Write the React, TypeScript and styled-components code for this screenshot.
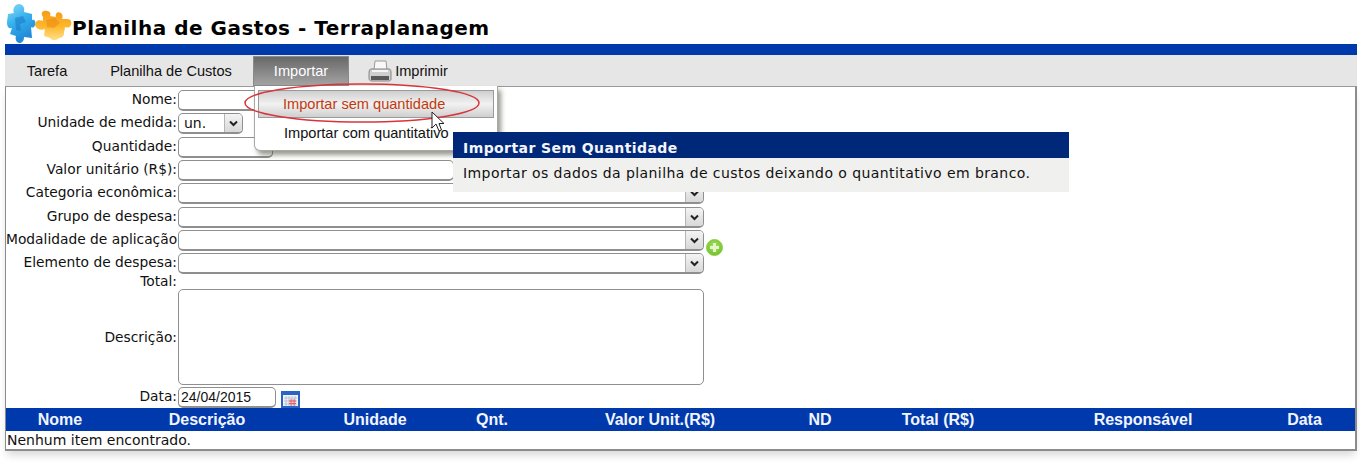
import styled, { createGlobalStyle } from "styled-components";

const GlobalStyle = createGlobalStyle`
  html, body {
    margin: 0;
    padding: 0;
    background: #fff;
    font-family: "DejaVu Sans", Verdana, sans-serif;
    color: #111;
  }
`;

const Page = styled.div`
  position: relative;
  width: 1360px;
  height: 467px;
  overflow: hidden;
  padding: 0 3px 0 5px;
  box-sizing: border-box;
`;

const Header = styled.header`
  height: 44px;
  display: flex;
  align-items: flex-end;
`;

const Logo = styled.svg`
  width: 67px;
  height: 44px;
  flex: none;
`;

const Title = styled.h1`
  margin: 0 0 3px;
  font-size: 20px;
  line-height: 26px;
  font-weight: bold;
  color: #000;
  letter-spacing: 0.5px;
`;

const BlueBar = styled.div`
  height: 11px;
  background: #0039ab;
`;

const Nav = styled.nav`
  height: 31px;
  background: #e6e6e6;
  display: flex;
  align-items: stretch;
  font-family: "Liberation Sans", Arial, sans-serif;
  font-size: 14.6px;
`;

const NavItem = styled.div<{ $width: number; $active?: boolean }>`
  width: ${p => p.$width}px;
  box-sizing: border-box;
  display: flex;
  align-items: center;
  justify-content: center;
  gap: 3px;
  margin-top: 1px;
  color: ${p => (p.$active ? "#fff" : "#111")};
  background: ${p => (p.$active ? "linear-gradient(#686868, #a3a3a3)" : "transparent")};
  border: ${p => (p.$active ? "1px solid #8a8a8a" : "none")};
`;

const Content = styled.main`
  height: 365px;
  box-sizing: border-box;
  border: 1px solid #8c8c8c;
  border-top-color: #9a9a9a;
  border-right-width: 2px;
  border-bottom: 2px solid #8c8c8c;
  box-shadow: 0 6px 8px -2px #d8d8d8;
  display: flex;
  flex-direction: column;
`;

const Form = styled.form`
  padding-top: 3px;
  height: 321px;
  box-sizing: border-box;
`;

const Row = styled.div<{ $height: number }>`
  height: ${p => p.$height}px;
  display: grid;
  grid-template-columns: 171px 1fr;
  gap: 1px;
  font-size: 13.8px;
`;

const Label = styled.label<{ $center?: boolean }>`
  text-align: right;
  white-space: nowrap;
  line-height: 18px;
  align-self: ${p => (p.$center ? "center" : "start")};
  margin-bottom: ${p => (p.$center ? "2px" : "0")};
`;

const Field = styled.div`
  display: flex;
  align-items: flex-start;
  gap: 1px;
`;

const TextInput = styled.input<{ $width: number }>`
  width: ${p => p.$width}px;
  height: 21px;
  box-sizing: border-box;
  padding: 0 2px;
  background: #fff;
  border: 1px solid #8f8f8f;
  border-bottom-width: 2px;
  border-radius: 5px;
  font-family: "Liberation Sans", Arial, sans-serif;
  font-size: 14px;
  color: #111;
  outline: none;
`;

const SelectBox = styled.div<{ $width: number }>`
  width: ${p => p.$width}px;
  height: 21px;
  box-sizing: border-box;
  display: flex;
  justify-content: space-between;
  padding-left: 5px;
  background: #fff;
  border: 1px solid #8f8f8f;
  border-bottom-width: 2px;
  border-radius: 5px;
  font-size: 14px;
  line-height: 19px;
`;

const SelectArrow = styled.span`
  width: 17px;
  flex: none;
  display: flex;
  align-items: center;
  justify-content: center;
  background: linear-gradient(#f4f4f4, #d8d8d8);
  border-left: 1px solid #b5b5b5;
  border-radius: 0 4px 4px 0;
`;

const TextArea = styled.textarea`
  width: 526px;
  height: 96px;
  box-sizing: border-box;
  background: #fff;
  border: 1px solid #8f8f8f;
  border-radius: 5px;
  resize: none;
  outline: none;
`;

const AddIcon = styled.svg`
  width: 19px;
  height: 19px;
  margin: 8px 0 0 0;
  flex: none;
`;

const CalendarIcon = styled.svg`
  width: 19px;
  height: 17px;
  margin: 4px 0 0 4px;
  flex: none;
`;

const TableHead = styled.div`
  height: 23px;
  display: grid;
  grid-template-columns: 108px 186px 150px 84px 252px 68px 168px 242px 91px;
  background: #0039ab;
  color: #f2f5ff;
  font-family: "Liberation Sans", Arial, sans-serif;
  font-size: 16px;
  font-weight: bold;
  line-height: 23px;
  text-align: center;

  & > span:last-child {
    padding-right: 10px;
  }
`;

const EmptyRow = styled.div`
  font-size: 14px;
  line-height: 18px;
  padding-left: 1px;
`;

const Menu = styled.div`
  position: absolute;
  left: 254px;
  top: 86px;
  width: 244px;
  height: 65px;
  box-sizing: border-box;
  padding: 4px 3px;
  background: #fff;
  border: 1px solid #a8a8a8;
  border-top: none;
  border-radius: 0 0 6px 6px;
  box-shadow: 3px 4px 5px rgba(70, 70, 50, 0.55);
  font-family: "Liberation Sans", Arial, sans-serif;
  font-size: 14.6px;
`;

const MenuItem = styled.div<{ $selected?: boolean }>`
  height: 28px;
  box-sizing: border-box;
  line-height: 27px;
  padding-left: ${p => (p.$selected ? "24px" : "26px")};
  white-space: nowrap;
  color: ${p => (p.$selected ? "#c23a0c" : "#111")};
  border: ${p => (p.$selected ? "1px solid #9a9a9a" : "none")};
  background: ${p =>
    p.$selected ? "linear-gradient(#cfcfcf, #f2f2f2 50%, #cfcfcf)" : "transparent"};
`;

const SecondItem = styled(MenuItem)`
  margin-top: 2px;
`;

const Ring = styled.svg`
  position: absolute;
  left: 242px;
  top: 81px;
  width: 240px;
  height: 44px;
`;

const Cursor = styled.svg`
  position: absolute;
  left: 431px;
  top: 111px;
  width: 14px;
  height: 21px;
`;

const Tooltip = styled.aside`
  position: absolute;
  left: 453px;
  top: 132px;
  width: 616px;
  height: 60px;
  background: #f0f0ee;
`;

const TooltipTitle = styled.div`
  height: 26px;
  padding-left: 10px;
  background: #002878;
  color: #f4f6fb;
  font-size: 14px;
  font-weight: bold;
  line-height: 33px;
  letter-spacing: 0.03em;
`;

const TooltipText = styled.div`
  padding: 6px 0 0 10px;
  font-size: 14px;
  line-height: 18px;
  letter-spacing: 0.03em;
  white-space: nowrap;
`;

const Chevron = () => (
  <svg width="9" height="7" viewBox="0 0 9 7">
    <path d="M1 1.5 L4.5 5 L8 1.5" fill="none" stroke="#222" strokeWidth="2" />
  </svg>
);

const Select = ({ width, value }: { width: number; value?: string }) => (
  <SelectBox $width={width}>
    <span>{value}</span>
    <SelectArrow>
      <Chevron />
    </SelectArrow>
  </SelectBox>
);

const columns = [
  "Nome",
  "Descrição",
  "Unidade",
  "Qnt.",
  "Valor Unit.(R$)",
  "ND",
  "Total (R$)",
  "Responsável",
  "Data",
];

const App = () => {
  return (
    <Page>
      <GlobalStyle />
      <Header>
        <Logo viewBox="0 0 67 44">
          <defs>
            <linearGradient id="blue" x1="0" y1="0" x2="0.4" y2="1">
              <stop offset="0" stopColor="#8adcf8" />
              <stop offset="0.5" stopColor="#36b0ec" />
              <stop offset="1" stopColor="#2088d8" />
            </linearGradient>
            <linearGradient id="orange" x1="0" y1="0" x2="0" y2="1">
              <stop offset="0" stopColor="#f79a14" />
              <stop offset="0.55" stopColor="#fdb92e" />
              <stop offset="1" stopColor="#ffe08a" />
            </linearGradient>
          </defs>
          <path
            fill="url(#blue)"
            d="M3 14 L9 13 C7 9 10 4 14 4 C18 4 20 8 19 12 L27 14 L27 20 C30 19 31 22 30 25 C29 28 27 28 26 27 L27 38 L19 37 C19 41 17 43 14 43 C11 42 10 39 11 36 L5 34 L7 28 C4 29 2 27 2 23 C2 19 3 17 3 14 Z"
          />
          <path fill="#1a78c4" opacity="0.55" d="M10 18 L18 16 L21 22 L15 24 L16 31 L11 30 Z" />
          <path
            fill="url(#orange)"
            d="M38 17 C35 13 38 10 42 11 C45 11 46 14 45 16 L51 17 C50 13 53 11 56 13 C58 15 58 17 57 19 L62 19 C66 19 67 22 66 25 C65 28 62 28 60 27 L59 33 C59 36 57 38 54 38 C51 41 47 41 45 38 L39 36 L40 29 C36 31 31 29 30 25 C30 21 34 19 38 21 Z"
          />
          <path fill="#f08a10" opacity="0.6" d="M41 20 L50 18 L55 23 L49 28 L42 27 Z" />
        </Logo>
        <Title>Planilha de Gastos - Terraplanagem</Title>
      </Header>
      <BlueBar />
      <Nav>
        <NavItem $width={84}>Tarefa</NavItem>
        <NavItem $width={164}>Planilha de Custos</NavItem>
        <NavItem $width={96} $active>
          Importar
        </NavItem>
        <NavItem $width={118}>
          <svg width="24" height="23" viewBox="0 0 24 23">
            <path d="M7 1 H18 L19 10 H6 Z" fill="#f8f8f8" stroke="#9a9a9a" />
            <path d="M3 9 H21 C23 9 23 11 23 13 V19 C23 21 21 21 20 21 H4 C2 21 1 20 1 18 V13 C1 10 2 9 3 9 Z" fill="#cfcfcf" stroke="#858585" />
            <path d="M3 16 H21 V20 H3 Z" fill="#5a5a5a" />
            <path d="M4 11 H20" stroke="#f6f6f6" strokeWidth="2" />
          </svg>
          Imprimir
        </NavItem>
      </Nav>
      <Content>
        <Form>
          <Row $height={23}>
            <Label>Nome:</Label>
            <Field>
              <TextInput $width={95} />
            </Field>
          </Row>
          <Row $height={24}>
            <Label>Unidade de medida:</Label>
            <Field>
              <Select width={65} value="un." />
            </Field>
          </Row>
          <Row $height={23}>
            <Label>Quantidade:</Label>
            <Field>
              <TextInput $width={95} />
            </Field>
          </Row>
          <Row $height={23}>
            <Label>Valor unitário (R$):</Label>
            <Field>
              <TextInput $width={276} />
            </Field>
          </Row>
          <Row $height={24}>
            <Label>Categoria econômica:</Label>
            <Field>
              <Select width={526} />
            </Field>
          </Row>
          <Row $height={23}>
            <Label>Grupo de despesa:</Label>
            <Field>
              <Select width={526} />
            </Field>
          </Row>
          <Row $height={23}>
            <Label>Modalidade de aplicação:</Label>
            <Field>
              <Select width={526} />
              <AddIcon viewBox="0 0 19 19">
                <defs>
                  <radialGradient id="green" cx="0.5" cy="0.4" r="0.6">
                    <stop offset="0" stopColor="#a8e060" />
                    <stop offset="1" stopColor="#72c02c" />
                  </radialGradient>
                </defs>
                <circle cx="9.5" cy="9.5" r="8" fill="url(#green)" stroke="#8ed04a" />
                <path d="M9.5 5 V14 M5 9.5 H14" stroke="#e4f6cc" strokeWidth="3" />
              </AddIcon>
            </Field>
          </Row>
          <Row $height={19}>
            <Label>Elemento de despesa:</Label>
            <Field>
              <Select width={526} />
            </Field>
          </Row>
          <Row $height={17}>
            <Label>Total:</Label>
            <Field />
          </Row>
          <Row $height={98}>
            <Label $center>Descrição:</Label>
            <Field>
              <TextArea />
            </Field>
          </Row>
          <Row $height={21}>
            <Label>Data:</Label>
            <Field>
              <TextInput $width={98} defaultValue="24/04/2015" />
              <CalendarIcon viewBox="0 0 19 17">
                <rect x="1" y="1" width="17" height="15" fill="#eef2fb" stroke="#2c62c4" strokeWidth="2" />
                <rect x="1" y="1" width="17" height="3" fill="#2c62c4" />
                <path d="M3 7 H16 M3 10 H16 M3 13 H16 M5 5 V15 M8 5 V15 M11 5 V15 M14 5 V15" stroke="#c0c0d0" />
                <path d="M8 10 H15 M8 12.5 H15 M10 8 V15 M13 8 V15" stroke="#e84848" strokeWidth="0.8" />
              </CalendarIcon>
            </Field>
          </Row>
        </Form>
        <TableHead>
          {columns.map(c => (
            <span key={c}>{c}</span>
          ))}
        </TableHead>
        <EmptyRow>Nenhum item encontrado.</EmptyRow>
      </Content>

      <Menu>
        <MenuItem $selected>Importar sem quantidade</MenuItem>
        <SecondItem>Importar com quantitativo</SecondItem>
      </Menu>
      <Ring viewBox="0 0 240 44">
        <ellipse cx="120" cy="22" rx="117" ry="19" fill="none" stroke="#d8343a" strokeWidth="1.5" />
      </Ring>
      <Tooltip>
        <TooltipTitle>Importar Sem Quantidade</TooltipTitle>
        <TooltipText>Importar os dados da planilha de custos deixando o quantitativo em branco.</TooltipText>
      </Tooltip>
      <Cursor viewBox="0 0 14 21">
        <path d="M1 1 V17 L5 13 L8 20 L10.5 19 L8 12.5 L13 12.5 Z" fill="#fff" stroke="#222" strokeWidth="1" />
      </Cursor>
    </Page>
  );
};

export default App;
